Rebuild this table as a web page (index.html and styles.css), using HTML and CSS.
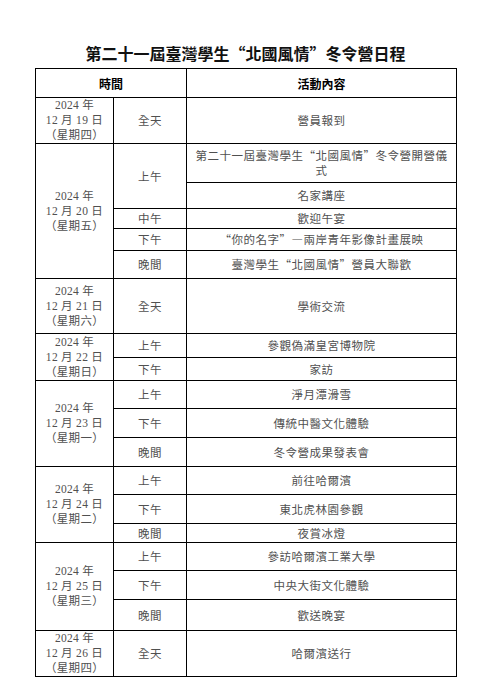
FILE: index.html
```html
<!DOCTYPE html>
<html lang="zh-Hant">
<head>
<meta charset="utf-8">
<title>冬令營日程</title>
<link rel="stylesheet" href="styles.css">
</head>
<body>
<div class="page">
  <h1 class="title">第二十一屆臺灣學生“北國風情”冬令營日程</h1>
  <table class="schedule">
    <colgroup>
      <col class="c-date">
      <col class="c-time">
      <col class="c-act">
    </colgroup>
    <thead>
      <tr class="h29">
        <th colspan="2">時間</th>
        <th>活動內容</th>
      </tr>
    </thead>
    <tbody>
      <tr class="h46">
        <td class="date">2024 年<br>12 月 19 日<br>（星期四）</td>
        <td>全天</td>
        <td>營員報到</td>
      </tr>

      <tr class="h39">
        <td class="date" rowspan="5">2024 年<br>12 月 20 日<br>（星期五）</td>
        <td rowspan="2">上午</td>
        <td>第二十一屆臺灣學生“北國風情”冬令營開營儀式</td>
      </tr>
      <tr class="h26"><td>名家講座</td></tr>
      <tr class="h20"><td>中午</td><td>歡迎午宴</td></tr>
      <tr class="h22"><td>下午</td><td>“你的名字”—兩岸青年影像計畫展映</td></tr>
      <tr class="h28"><td>晚間</td><td>臺灣學生“北國風情”營員大聯歡</td></tr>

      <tr class="h55">
        <td class="date">2024 年<br>12 月 21 日<br>（星期六）</td>
        <td>全天</td>
        <td>學術交流</td>
      </tr>

      <tr class="h24">
        <td class="date" rowspan="2">2024 年<br>12 月 22 日<br>（星期日）</td>
        <td>上午</td>
        <td>參觀偽滿皇宮博物院</td>
      </tr>
      <tr class="h23"><td>下午</td><td>家訪</td></tr>

      <tr class="h28">
        <td class="date" rowspan="3">2024 年<br>12 月 23 日<br>（星期一）</td>
        <td>上午</td>
        <td>淨月潭滑雪</td>
      </tr>
      <tr class="h29"><td>下午</td><td>傳統中醫文化體驗</td></tr>
      <tr class="h29"><td>晚間</td><td>冬令營成果發表會</td></tr>

      <tr class="h28">
        <td class="date" rowspan="3">2024 年<br>12 月 24 日<br>（星期二）</td>
        <td>上午</td>
        <td>前往哈爾濱</td>
      </tr>
      <tr class="h29"><td>下午</td><td>東北虎林園參觀</td></tr>
      <tr class="h19"><td>晚間</td><td>夜賞冰燈</td></tr>

      <tr class="h28">
        <td class="date" rowspan="3">2024 年<br>12 月 25 日<br>（星期三）</td>
        <td>上午</td>
        <td>參訪哈爾濱工業大學</td>
      </tr>
      <tr class="h29"><td>下午</td><td>中央大街文化體驗</td></tr>
      <tr class="h31"><td>晚間</td><td>歡送晚宴</td></tr>

      <tr class="h45">
        <td class="date">2024 年<br>12 月 26 日<br>（星期四）</td>
        <td>全天</td>
        <td>哈爾濱送行</td>
      </tr>
    </tbody>
  </table>
</div>
</body>
</html>
```

FILE: styles.css
```css
html, body {
  margin: 0;
  padding: 0;
  background: #ffffff;
}

.page {
  width: 491px;
  padding-top: 42px;
  box-sizing: border-box;
}

.title {
  margin: 0 0 4px 0;
  font-family: "Noto Sans CJK TC", "Noto Sans CJK SC", sans-serif;
  font-feature-settings: "fwid" 1;
  font-weight: 700;
  font-size: 16px;
  line-height: 22px;
  text-align: center;
  color: #111;
  letter-spacing: 0;
}

.schedule {
  margin-left: 35px;
  width: 421px;
  border-collapse: collapse;
  table-layout: fixed;
  font-family: "Noto Sans CJK TC", "Noto Sans CJK SC", sans-serif;
  font-feature-settings: "fwid" 1;
  font-size: 11.5px;
  line-height: 15px;
  color: #505050;
  border: 1.5px solid #000;
}

.c-date { width: 78px; }
.c-time { width: 73px; }
.c-act { width: 270px; }

.schedule th,
.schedule td {
  border: 1px solid #000;
  padding: 0 4px;
  text-align: center;
  vertical-align: middle;
  letter-spacing: 0.5px;
  font-weight: 400;
}

.schedule th {
  font-weight: 700;
  font-size: 12px;
  color: #000;
  letter-spacing: 0;
}

.schedule td.date {
  font-family: "Liberation Serif", "Noto Sans CJK TC", serif;
  font-feature-settings: normal;
  letter-spacing: 0.3px;
  padding: 0 2px;
}

.h19 { height: 19px; }
.h20 { height: 20px; }
.h22 { height: 22px; }
.h23 { height: 23px; }
.h24 { height: 24px; }
.h26 { height: 26px; }
.h28 { height: 28px; }
.h29 { height: 29px; }
.h31 { height: 31px; }
.h39 { height: 39px; }
.h45 { height: 45px; }
.h46 { height: 46px; }
.h55 { height: 55px; }
```
